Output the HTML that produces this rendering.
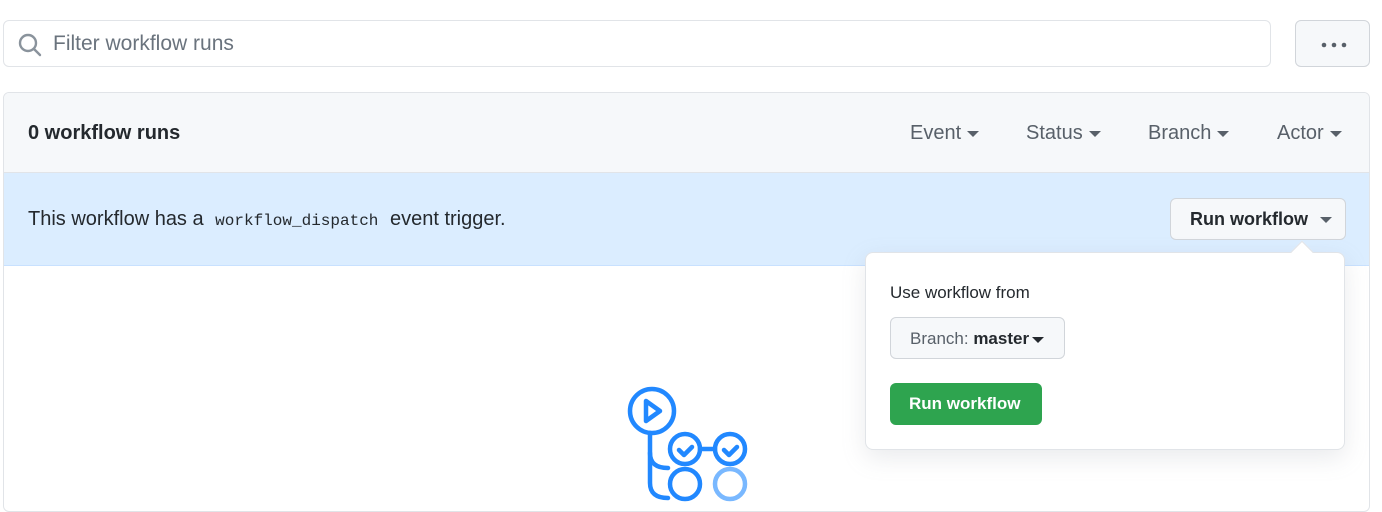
<!DOCTYPE html>
<html><head><style>
*{box-sizing:border-box;margin:0;padding:0}
body{width:1382px;height:483px;overflow:hidden;background:#fff;font-family:"Liberation Sans",sans-serif;color:#24292e;position:relative}
.abs{position:absolute}
.search{left:3px;top:20px;width:1268px;height:47px;border:1px solid #e1e4e8;border-radius:6px;}
.search span{position:absolute;left:49px;top:11px;font-size:21px;color:#6a737d}
.more{left:1295px;top:20px;width:75px;height:47px;border:1px solid #d1d5da;border-radius:6px;background:#f6f8fa}
.box{left:3px;top:92px;width:1367px;height:420px;border:1px solid #e1e4e8;border-radius:6px;overflow:hidden}
.hdr{left:0;top:0;width:100%;height:80px;background:#f6f8fa;border-bottom:1px solid #e1e4e8}
.band{left:0;top:80px;width:100%;height:93px;background:#dbedff;border-bottom:1px solid #c8e1ff}
.f{font-size:20px;color:#586069}
.car{display:inline-block;width:0;height:0;border-left:6px solid transparent;border-right:6px solid transparent;border-top:6px solid #586069;vertical-align:middle;margin-left:6px}
code{font-family:"Liberation Mono",monospace;font-size:16px;padding:2px 6px}
.btn{border:1px solid #d1d5da;border-radius:6px;background:#f6f8fa}
.pop{left:865px;top:252px;width:480px;height:198px;background:#fff;border:1px solid #e1e4e8;border-radius:8px;box-shadow:0 8px 24px rgba(149,157,165,.2)}
</style></head><body>
<div class="abs search">
<svg class="abs" style="left:14px;top:12px" width="24" height="24" viewBox="0 0 24 24" fill="none" stroke="#8a939c" stroke-width="2.4"><circle cx="10" cy="10" r="8"/><path d="M16 16l6 6" stroke-linecap="round"/></svg>
<span>Filter workflow runs</span></div>
<div class="abs more"><svg class="abs" style="left:25px;top:21px" width="26" height="6"><circle cx="3" cy="3" r="2.3" fill="#586069"/><circle cx="13" cy="3" r="2.3" fill="#586069"/><circle cx="23" cy="3" r="2.3" fill="#586069"/></svg></div>
<div class="abs box">
<div class="abs hdr">
<div class="abs" style="left:24px;top:29px;font-size:20px;font-weight:bold">0 workflow runs</div>
<div class="abs f" style="left:906px;top:29px">Event<span class="car"></span></div>
<div class="abs f" style="left:1022px;top:29px">Status<span class="car"></span></div>
<div class="abs f" style="left:1144px;top:29px">Branch<span class="car"></span></div>
<div class="abs f" style="left:1273px;top:29px">Actor<span class="car"></span></div>
</div>
<div class="abs band">
<div class="abs" style="left:24px;top:35px;font-size:20px">This workflow has a <code>workflow_dispatch</code> event trigger.</div>
<div class="abs btn" style="left:1166px;top:25px;width:176px;height:42px;font-size:18px;font-weight:bold;padding:10px 0 0 19px">Run workflow<span class="car" style="margin-left:12px"></span></div>
</div>
<svg class="abs" style="left:615px;top:285px" width="140" height="140" fill="none" stroke="#2188ff" stroke-width="4.5" stroke-linecap="round" stroke-linejoin="round">
<circle cx="33" cy="33" r="22"/><path d="M27 23v20l14-10z"/>
<path d="M31 55v20q0 15 18 15"/><path d="M31 75v30q0 15 18 15"/>
<circle cx="66" cy="71" r="15"/><circle cx="111" cy="71" r="15"/>
<path d="M81 71h15"/><path d="M60 72l5 5 8-8M105 72l5 5 8-8"/>
<circle cx="66" cy="106" r="15"/><circle cx="111" cy="106" r="15" stroke="#79b8ff"/>
</svg>
</div>
<div class="abs pop">
<div class="abs" style="left:24px;top:30px;font-size:17px">Use workflow from</div>
<div class="abs btn" style="left:24px;top:64px;width:175px;height:42px;font-size:17px;color:#586069;padding:11px 0 0 19px">Branch: <b style="color:#24292e">master</b><span class="car" style="border-top-color:#24292e;margin-left:3px"></span></div>
<div class="abs" style="left:24px;top:130px;width:152px;height:42px;background:#2ea44f;border-radius:6px;color:#fff;font-weight:bold;font-size:17px;padding:11px 0 0 19px">Run workflow</div>
</div>
<div class="abs" style="left:1294px;top:244px;width:16px;height:16px;background:#fff;transform:rotate(45deg);border-left:1px solid #e1e4e8;border-top:1px solid #e1e4e8"></div>
</body></html>
